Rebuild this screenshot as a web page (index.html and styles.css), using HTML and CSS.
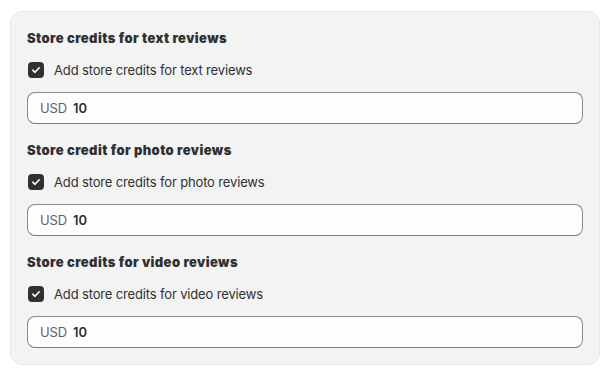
FILE: index.html
```html
<!DOCTYPE html>
<html>
<head>
<meta charset="utf-8">
<link rel="stylesheet" href="styles.css">
</head>
<body>
<div class="page">
  <div class="card">
    <section class="section">
      <h2 class="title">Store credits for text reviews</h2>
      <label class="check">
        <span class="box"><svg viewBox="0 0 16 16" width="16" height="16"><path d="M4.8 8.2 L7 10.3 L11.2 5.8" fill="none" stroke="#fff" stroke-width="1.6" stroke-linecap="round" stroke-linejoin="round"/></svg></span>
        <span class="label">Add store credits for text reviews</span>
      </label>
      <div class="field"><span class="prefix">USD</span><span class="value">10</span></div>
    </section>
    <section class="section">
      <h2 class="title">Store credit for photo reviews</h2>
      <label class="check">
        <span class="box"><svg viewBox="0 0 16 16" width="16" height="16"><path d="M4.8 8.2 L7 10.3 L11.2 5.8" fill="none" stroke="#fff" stroke-width="1.6" stroke-linecap="round" stroke-linejoin="round"/></svg></span>
        <span class="label">Add store credits for photo reviews</span>
      </label>
      <div class="field"><span class="prefix">USD</span><span class="value">10</span></div>
    </section>
    <section class="section">
      <h2 class="title">Store credits for video reviews</h2>
      <label class="check">
        <span class="box"><svg viewBox="0 0 16 16" width="16" height="16"><path d="M4.8 8.2 L7 10.3 L11.2 5.8" fill="none" stroke="#fff" stroke-width="1.6" stroke-linecap="round" stroke-linejoin="round"/></svg></span>
        <span class="label">Add store credits for video reviews</span>
      </label>
      <div class="field"><span class="prefix">USD</span><span class="value">10</span></div>
    </section>
  </div>
</div>
</body>
</html>
```
FILE: styles.css
```css
* { box-sizing: border-box; }
html, body { margin: 0; padding: 0; background: #ffffff; }
body {
  font-family: Inter, "Noto Sans", sans-serif;
  font-size: 13px;
  line-height: 20px;
  color: #303030;
}
.page {
  padding: 11px 9px 0 10px;
}
.card {
  background: #f3f3f3;
  border: 1px solid #e6e6e6;
  border-radius: 12px;
  padding: 16px;
  display: flex;
  flex-direction: column;
  gap: 16px;
}
.section {
  display: flex;
  flex-direction: column;
  gap: 12px;
}
.title {
  margin: 0;
  font-size: 13px;
  line-height: 20px;
  font-weight: 900;
  letter-spacing: 0.4px;
  color: #303030;
}
.check {
  display: flex;
  align-items: center;
  height: 20px;
  gap: 10px;
  padding-left: 1px;
}
.box {
  width: 16px;
  height: 16px;
  border-radius: 4px;
  background: #303030;
  display: flex;
}
.label {
  color: #303030;
  letter-spacing: -0.15px;
}
.field {
  height: 32px;
  background: #fdfdfd;
  border: 1px solid #8a8a8a;
  border-bottom-color: #7a7a7a;
  border-radius: 8px;
  display: flex;
  align-items: center;
  padding: 0 12px;
  gap: 6px;
}
.prefix { color: #616161; letter-spacing: -0.1px; }
.value { color: #303030; font-weight: 600; }
```
